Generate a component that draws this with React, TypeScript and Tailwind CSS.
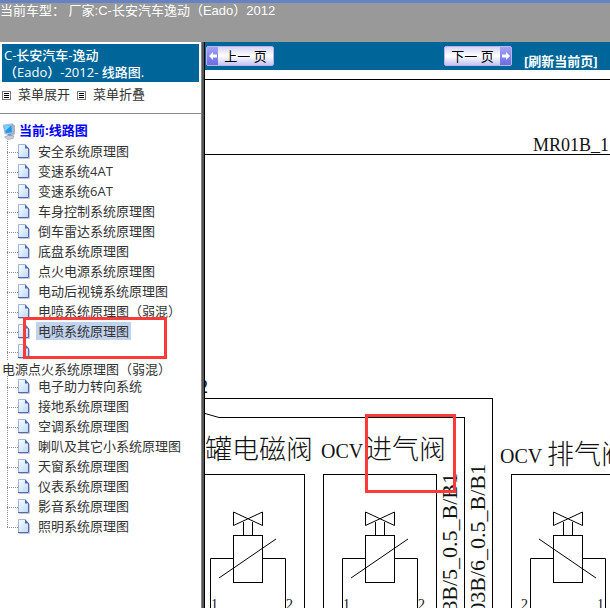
import type { ReactNode } from 'react';

const menuItems = [
  { label: '安全系统原理图' },
  { label: '变速系统4AT' },
  { label: '变速系统6AT' },
  { label: '车身控制系统原理图' },
  { label: '倒车雷达系统原理图' },
  { label: '底盘系统原理图' },
  { label: '点火电源系统原理图' },
  { label: '电动后视镜系统原理图' },
  { label: '电喷系统原理图（弱混）' },
  { label: '电喷系统原理图', selected: true },
  { label: '电源点火系统原理图（弱混）', wrapped: true },
  { label: '电子助力转向系统' },
  { label: '接地系统原理图' },
  { label: '空调系统原理图' },
  { label: '喇叭及其它小系统原理图' },
  { label: '天窗系统原理图' },
  { label: '仪表系统原理图' },
  { label: '影音系统原理图' },
  { label: '照明系统原理图' },
];

function ListIcon() {
  return (
    <svg width="9" height="9" viewBox="0 0 9 9" shapeRendering="crispEdges" aria-hidden="true">
      <rect x="0.5" y="0.5" width="8" height="8" fill="#fff" stroke="#777" />
      <path d="M2 2.5H7M2 4.5H7M2 6.5H7" stroke="#000" />
    </svg>
  );
}

function ComputerIcon() {
  return (
    <svg width="14" height="17" viewBox="0 0 14 17" className="shrink-0" aria-hidden="true">
      <path d="M10 1L12.5 2.5V11L10.5 12.5Z" fill="#b4b8c6" stroke="#9296a6" strokeWidth="0.6" />
      <path d="M1.2 2L10.5 0.8L11 10.5L3 11Z" fill="#b5d0f0" stroke="#7fa0cc" strokeWidth="0.6" />
      <path d="M2.2 3L9.5 2L10 9.5L3.6 10Z" fill="#2196ea" />
      <path d="M2.2 3L9.5 2L3.4 8Z" fill="#7dd0fc" />
      <path d="M5.5 11L9.5 10.7L10 13L5.5 13.5Z" fill="#8795b5" />
      <path d="M2.5 14L6 12.5L12 13L11 15.5L6 16.5Z" fill="#ccd0de" stroke="#8d93a8" strokeWidth="0.6" />
    </svg>
  );
}

function PageIcon() {
  return (
    <svg width="12" height="16" viewBox="0 0 12 16" className="shrink-0" aria-hidden="true">
      <defs>
        <linearGradient id="page" x1="0" y1="0" x2="1" y2="1">
          <stop offset="0" stopColor="#fff" />
          <stop offset="1" stopColor="#bcd8fb" />
        </linearGradient>
      </defs>
      <path d="M1 15.5H11.5V6" fill="none" stroke="#c3c6d4" />
      <path d="M0 1.5H7.5L10.5 5V14.5H0Z" fill="url(#page)" />
      <path d="M0.5 14V1.5H7" fill="none" stroke="#9db4dc" />
      <path d="M10.5 5V14.5H0" fill="none" stroke="#5768a8" />
      <path d="M7 1L11 5.5H7Z" fill="#4a6cb8" />
    </svg>
  );
}

function TreeLines({ last = false }: { last?: boolean }) {
  return (
    <svg width="11" height="20" viewBox="0 0 11 20" className="shrink-0" shapeRendering="crispEdges" aria-hidden="true">
      <path d={last ? 'M0.5 0V11' : 'M0.5 0V20'} stroke="#888" strokeDasharray="1 1" />
      <path d="M0 11.5H11" stroke="#888" strokeDasharray="1 1" />
    </svg>
  );
}

function PagerButton({ children, next = false }: { children: ReactNode; next?: boolean }) {
  return (
    <button
      className={`flex h-[20px] w-[68px] items-stretch overflow-hidden rounded-xs border border-[#b9b4ea] bg-linear-to-b from-[#d4d4f6] via-white to-[#c4c4f4] ${
        next ? 'flex-row-reverse' : ''
      }`}
    >
      <span className="flex w-[11px] items-center justify-center bg-linear-to-b from-[#a4a4f4] to-[#6c6ce0]">
        <svg width="8" height="8" viewBox="0 0 8 8" className={next ? 'rotate-180' : ''} aria-hidden="true">
          <path d="M0 4L4 0V2.5H8V5.5H4V8Z" fill="#fff" />
        </svg>
      </span>
      <span className="flex-1 text-center text-[13px] leading-[18px] text-black">{children}</span>
    </button>
  );
}

function Valve({ x, flipped = false }: { x: number; flipped?: boolean }) {
  return (
    <g transform={`translate(${x} 0)`}>
      <path d="M0.5 442V455.5L29.5 442V455.5Z" />
      <path d="M10.5 452V465M19.5 452V465" />
      <rect x="0.5" y="465.5" width="29" height="47" />
      <path d="M0 488.5H-22.5V540M29 488.5H52.5V540" />
      <path d={flipped ? 'M-14 469L43 508' : 'M-14 508L43 469'} />
    </g>
  );
}

function WiringDiagram() {
  return (
    <svg width="1000" height="538" viewBox="0 0 1000 538" className="block max-w-none" role="img" aria-label="电喷系统原理图">
      <g fill="none" stroke="#000" shapeRendering="crispEdges">
        <path d="M0 9.5H1000M0 84.5H1000" />
        <path d="M0 328.5H287.5V538" />
        <path d="M14 347.5H259.5V538" />
        <path d="M0 404.5H99.5V538M118.5 538V404.5H231.5V538M306.5 538V404.5H430" />
      </g>
      <g fill="none" stroke="#000">
        <path d="M0 343.5L14 347.5" />
        <Valve x={28} />
        <Valve x={160} />
        <Valve x={348} flipped />
      </g>
      <g fill="#111" fontWeight="300" fontSize="27" className="font-['Noto_Sans_CJK_SC',sans-serif]">
        <text x="0" y="389">罐电磁阀</text>
        <text x="160" y="389">进气阀</text>
        <text x="342" y="394">排气阀</text>
      </g>
      <g fill="#111" className="font-['Liberation_Serif',serif]">
        <text x="-6" y="323" fontSize="18">2</text>
        <text x="328" y="81" fontSize="18">MR01B_1</text>
        <text x="116" y="388" fontSize="20">OCV</text>
        <text x="295" y="393" fontSize="20">OCV</text>
        <text transform="translate(252 403) rotate(-90)" textAnchor="end" fontSize="22">03B/5_0.5_B/B1</text>
        <text transform="translate(280 394) rotate(-90)" textAnchor="end" fontSize="22">03B/6_0.5_B/B1</text>
      </g>
      <g fill="#111" fontSize="14" className="font-['Liberation_Serif',serif]">
        <text x="6" y="539">1</text>
        <text x="81" y="539">2</text>
        <text x="138" y="539">1</text>
        <text x="213" y="539">2</text>
        <text x="316" y="539">2</text>
        <text x="392" y="539">1</text>
      </g>
    </svg>
  );
}

export default function App() {
  return (
    <div className="flex h-screen flex-col overflow-hidden bg-white font-['Open_Sans','Noto_Sans_CJK_SC',sans-serif] text-[13px] text-[#333]">
      <header className="h-[42px] shrink-0 border-t-3 border-[#6482c4] bg-[#999] font-['Liberation_Sans','Noto_Sans_CJK_SC',sans-serif] text-[13px] leading-[16px] text-white">
        当前车型： 厂家:C-长安汽车逸动（Eado）2012
      </header>

      <div className="flex min-h-0 flex-1">
        <aside className="relative w-[201px] shrink-0 overflow-hidden">
          <h1 className="mx-[2px] mt-[2px] bg-[#069] px-[2px] pt-[3px] pb-px text-[13px] leading-[17px] font-medium text-white">
            C-长安汽车-逸动
            <br />
            （Eado）-2012- 线路图.
          </h1>

          <div className="flex h-[32px] items-center gap-[7px] border-b border-[#888] pb-[5px] pl-[2px]">
            <ListIcon />
            <button>菜单展开</button>
            <ListIcon />
            <button>菜单折叠</button>
          </div>

          <nav className="pt-[7px]">
            <a href="#diagrams" className="flex h-[20px] items-center gap-[3px] pl-[2px] font-bold text-[#00f]">
              <ComputerIcon />
              当前:线路图
            </a>
            <ul>
              {menuItems.map((item, index) => (
                <li key={item.label}>
                  <a
                    href={`#${index}`}
                    className={
                      item.wrapped
                        ? 'flex h-[35px] flex-col leading-[17px] whitespace-nowrap'
                        : 'flex h-[20px] items-center leading-[18px] whitespace-nowrap'
                    }
                  >
                    <span className="flex h-[20px] shrink-0 items-center pl-[7px]">
                      <TreeLines last={index === menuItems.length - 1} />
                      <PageIcon />
                    </span>
                    <span
                      className={
                        item.wrapped ? 'pl-[2px]' : item.selected ? 'ml-[6px] bg-[#c1d2ee] px-[2px]' : 'ml-[6px] px-[2px]'
                      }
                    >
                      {item.label}
                    </span>
                  </a>
                </li>
              ))}
            </ul>
          </nav>

          <div className="pointer-events-none absolute top-[275px] left-[23px] h-[42px] w-[144px] border-3 border-[#fb3a3a]" />
        </aside>

        <div className="w-[4px] shrink-0 border-r border-l border-r-black border-l-[#888] bg-[#555]" />

        <main className="relative min-w-0 flex-1 overflow-hidden">
          <div className="flex h-[28px] items-start bg-[#069] pt-[4px] pl-px">
            <PagerButton>上一 页</PagerButton>
            <div className="ml-[170px]">
              <PagerButton next>下一 页</PagerButton>
            </div>
            <a href="#refresh" className="mt-[6px] ml-[12px] text-[13px] leading-[18px] font-bold whitespace-nowrap text-white">
              [刷新当前页]
            </a>
          </div>
          <WiringDiagram />
          <div className="pointer-events-none absolute top-[372px] left-[160px] h-[79px] w-[91px] border-3 border-[#fb3a3a]" />
        </main>
      </div>
    </div>
  );
}
